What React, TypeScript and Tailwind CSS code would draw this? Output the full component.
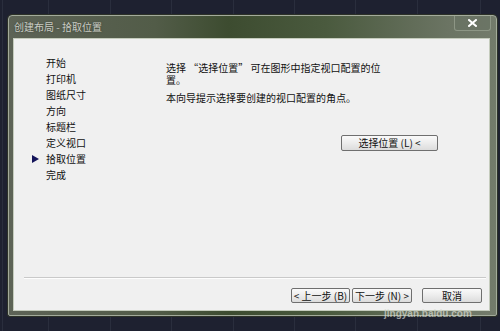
import React from "react";

const navItems = ["开始", "打印机", "图纸尺寸", "方向", "标题栏", "定义视口", "拾取位置", "完成"];

function Btn({ children, className }: { children: React.ReactNode; className: string }) {
  return (
    <div
      className={
        "flex items-center justify-center rounded-[2px] border border-[#6f6f6f] bg-[linear-gradient(180deg,#fafafa_0%,#ececec_50%,#dcdcdc_100%)] text-[10px] leading-none text-[#111] " +
        className
      }
    >
      {children}
    </div>
  );
}

export default function App() {
  const gridX = [2, 48, 110, 171, 233, 294, 355, 417, 480];
  return (
    <div className="relative h-[331px] w-[500px] overflow-hidden bg-[#1e2130] font-['Noto_Sans_CJK_SC','Noto_Sans',sans-serif]">
      <svg className="absolute inset-0" width="500" height="331">
        {gridX.map((x) => (
          <line key={x} x1={x + 0.5} y1={0} x2={x + 0.5} y2={331} stroke="#2a2e3d" strokeWidth={1} />
        ))}
      </svg>

      <div className="relative pl-[8px] pt-[15px]">
        <div className="relative flex h-[301px] w-[489px] flex-col rounded-t-[4px] rounded-b-[2px] border border-[#a3ab9b] bg-[linear-gradient(90deg,#5d6356_0%,#525c48_30%,#3d4c30_45%,#4a5a3e_65%,#6b7463_90%,#737b6b_100%)] shadow-[0_0_0_1px_#2c3128]">
          {/* title bar */}
          <div className="flex h-[22px] items-center pl-[5px]">
            <span className="text-[10px] leading-none text-[#c9ccc4] [text-shadow:0_0_2px_#3a4034]">创建布局 - 拾取位置</span>
          </div>
          {/* close button */}
          <div className="absolute right-[5px] top-0 flex h-[15px] w-[37px] items-center justify-center rounded-b-[3px] border border-t-0 border-[#8d9685] bg-[#687262]/60">
            <svg width="9" height="8" viewBox="0 0 9 8">
              <path d="M1 1 L8 7 M8 1 L1 7" stroke="#ffffff" strokeWidth="2" strokeLinecap="square" />
            </svg>
          </div>

          {/* client area */}
          <div className="mb-[4px] ml-[4px] mr-[6px] flex flex-1 flex-col border border-[#c5ccbd] bg-[#f0f0f0]">
            <div className="flex h-[238px]">
              {/* nav */}
              <div className="w-[152px] pl-[18px] pt-[16px]">
                {navItems.map((item) => (
                  <div key={item} className="flex h-[16px] items-center">
                    <div className="flex w-[14px] items-center">
                      {item === "拾取位置" && (
                        <svg width="7" height="8" viewBox="0 0 7 8">
                          <path d="M0 0 L7 4 L0 8 Z" fill="#14145a" />
                        </svg>
                      )}
                    </div>
                    <span className="text-[10px] leading-none text-[#111]">{item}</span>
                  </div>
                ))}
              </div>
              {/* content */}
              <div className="flex flex-col pt-[23px]">
                <p className="text-[10px] leading-[12px] text-[#111]">
                  选择 “选择位置” 可在图形中指定视口配置的位
                  <br />
                  置。
                </p>
                <p className="mt-[6px] text-[10px] leading-[12px] text-[#111]">本向导提示选择要创建的视口配置的角点。</p>
                <div className="ml-[175px] mt-[31px]">
                  <Btn className="h-[16px] w-[97px]">选择位置 (L) &lt;</Btn>
                </div>
              </div>
            </div>
            {/* separator */}
            <div className="ml-[10px] mr-[3px] h-[2px] border-t border-b border-t-[#c9c9c9] border-b-[#fdfdfd]" />
            {/* buttons */}
            <div className="flex justify-end pr-[7px] pt-[9px]">
              <Btn className="h-[15px] w-[59px]">&lt; 上一步 (B)</Btn>
              <Btn className="ml-[2px] h-[15px] w-[60px]">下一步 (N) &gt;</Btn>
              <Btn className="ml-[10px] h-[15px] w-[60px]">取消</Btn>
            </div>
          </div>
        </div>
      </div>

      <div className="absolute left-[384px] top-[309px] text-[10px] font-bold leading-none text-[#d8dcd4]/70 font-['Liberation_Sans',sans-serif]">
        jingyan.baidu.com
      </div>
    </div>
  );
}
